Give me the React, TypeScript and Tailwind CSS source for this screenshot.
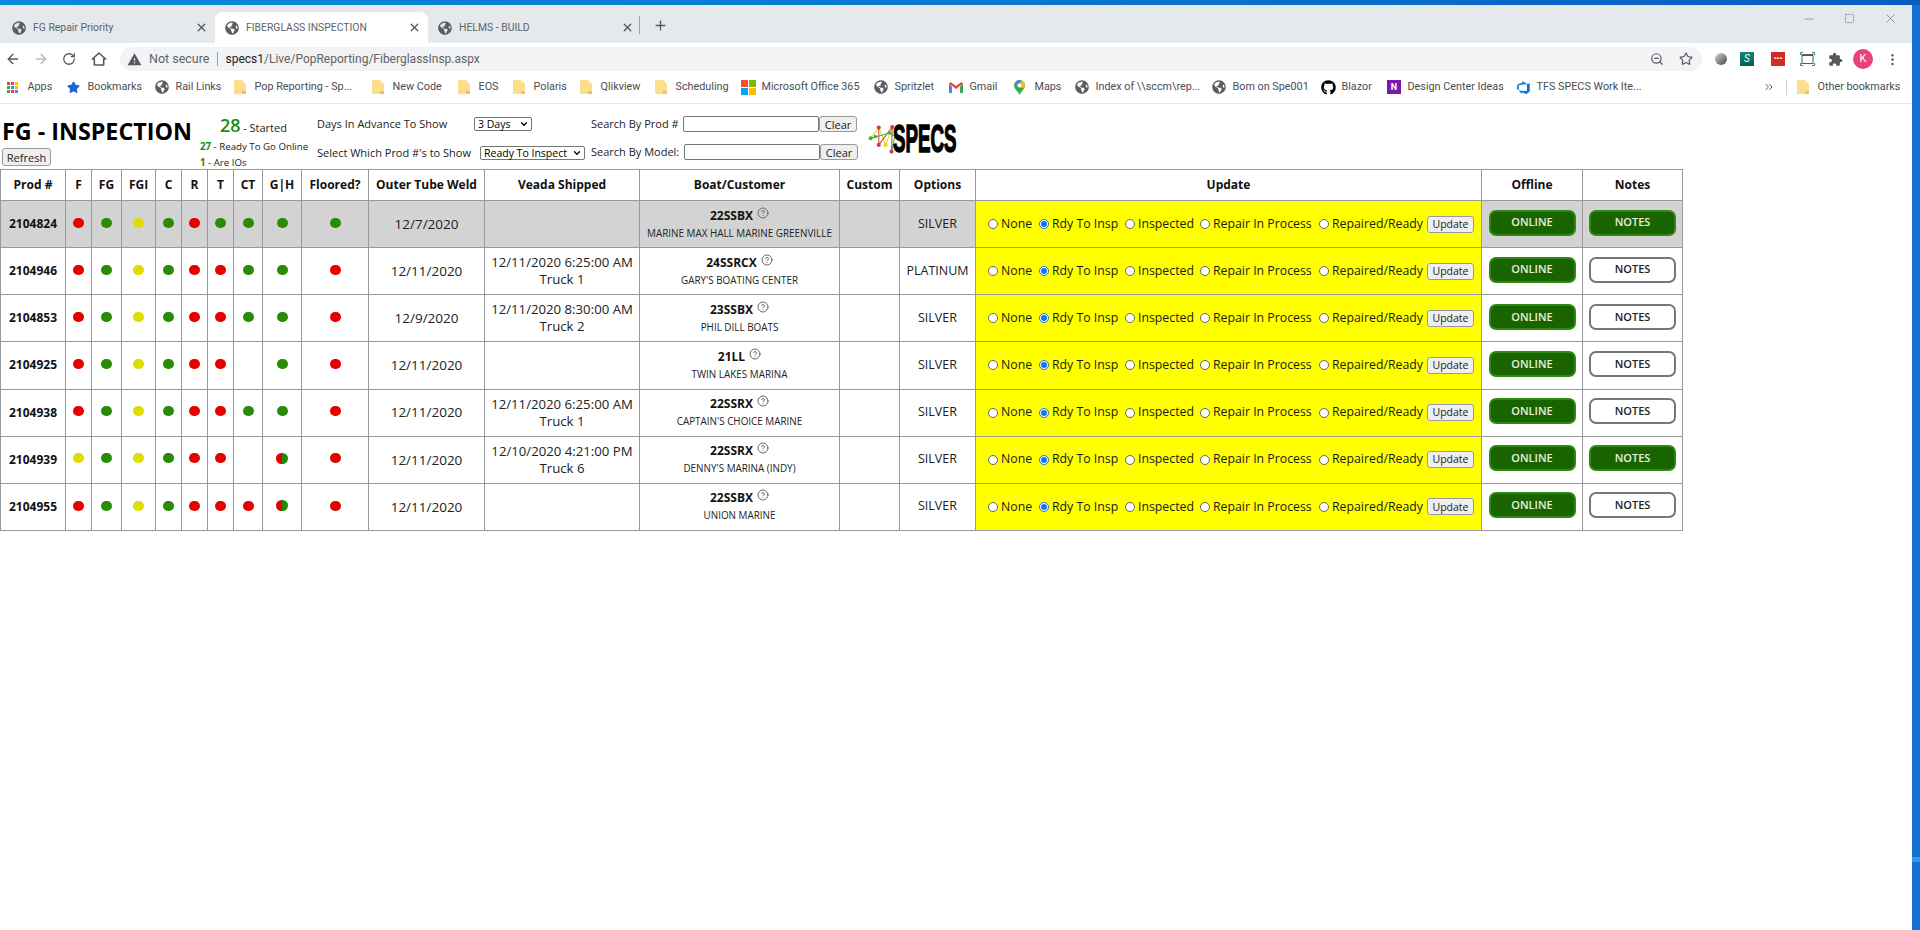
import { X, Plus, ArrowLeft, ArrowRight, RotateCw, Star, ZoomOut, EllipsisVertical, Minus, Square, ChevronsRight, ChevronDown, CircleHelp } from "lucide-react";
import { FaGlobeAmericas, FaGithub } from "react-icons/fa";
import { MdExtension, MdWarning } from "react-icons/md";

const cols = [65, 26, 30, 34, 26, 26, 26, 29, 39, 67, 116, 155, 200, 60, 76, 506, 101, 100];

type Dot = "r" | "g" | "y" | "s" | "";

interface Row {
  prod: string;
  dots: Dot[];
  floored: Dot;
  weld: string;
  ship?: string;
  truck?: string;
  boat: string;
  customer: string;
  options: string;
  notes?: boolean;
  grey?: boolean;
}

const rows: Row[] = [
  { prod: "2104824", dots: ["r", "g", "y", "g", "r", "g", "g", "g"], floored: "g", weld: "12/7/2020", boat: "22SSBX", customer: "MARINE MAX HALL MARINE GREENVILLE", options: "SILVER", notes: true, grey: true },
  { prod: "2104946", dots: ["r", "g", "y", "g", "r", "r", "g", "g"], floored: "r", weld: "12/11/2020", ship: "12/11/2020 6:25:00 AM", truck: "Truck 1", boat: "24SSRCX", customer: "GARY'S BOATING CENTER", options: "PLATINUM" },
  { prod: "2104853", dots: ["r", "g", "y", "g", "r", "r", "g", "g"], floored: "r", weld: "12/9/2020", ship: "12/11/2020 8:30:00 AM", truck: "Truck 2", boat: "23SSBX", customer: "PHIL DILL BOATS", options: "SILVER" },
  { prod: "2104925", dots: ["r", "g", "y", "g", "r", "r", "", "g"], floored: "r", weld: "12/11/2020", boat: "21LL", customer: "TWIN LAKES MARINA", options: "SILVER" },
  { prod: "2104938", dots: ["r", "g", "y", "g", "r", "r", "g", "g"], floored: "r", weld: "12/11/2020", ship: "12/11/2020 6:25:00 AM", truck: "Truck 1", boat: "22SSRX", customer: "CAPTAIN'S CHOICE MARINE", options: "SILVER" },
  { prod: "2104939", dots: ["y", "g", "y", "g", "r", "r", "", "s"], floored: "r", weld: "12/11/2020", ship: "12/10/2020 4:21:00 PM", truck: "Truck 6", boat: "22SSRX", customer: "DENNY'S MARINA (INDY)", options: "SILVER", notes: true },
  { prod: "2104955", dots: ["r", "g", "y", "g", "r", "r", "r", "s"], floored: "r", weld: "12/11/2020", boat: "22SSBX", customer: "UNION MARINE", options: "SILVER" },
];

const headers = ["Prod #", "F", "FG", "FGI", "C", "R", "T", "CT", "G|H", "Floored?", "Outer Tube Weld", "Veada Shipped", "Boat/Customer", "Custom", "Options", "Update", "Offline", "Notes"];

function FolderIcon() {
  return (
    <svg width="12" height="16" viewBox="0 0 12 16">
      <path d="M0 1h8l4 4v10H0z" fill="#fbdf8f" />
      <path d="M8 15v-3h4v3z" fill="#eec35a" />
    </svg>
  );
}

function GlobeIcon() {
  return <FaGlobeAmericas size={14} className="shrink-0 text-[#5a5e63]" />;
}

function AppsIcon() {
  const colors = ["#ea4335", "#ea4335", "#fbbc04", "#34a853", "#4285f4", "#fbbc04", "#34a853", "#ea4335", "#4285f4"];
  return (
    <div className="grid grid-cols-3 gap-px w-[11px]">
      {colors.map((c, i) => (
        <span key={i} className="h-[3px] w-[3px]" style={{ background: c }} />
      ))}
    </div>
  );
}

function GmailIcon() {
  return (
    <svg width="14" height="11" viewBox="0 0 14 11">
      <path d="M0 1.5v9.5h3V4.5z" fill="#4285f4" />
      <path d="M14 1.5v9.5h-3V4.5z" fill="#34a853" />
      <path d="M0 1.5 L7 7 L14 1.5 L12.5 0 L7 4 L1.5 0z" fill="#ea4335" />
    </svg>
  );
}

function MapsIcon() {
  return (
    <svg width="11" height="15" viewBox="0 0 11 15">
      <path d="M5.5 0C2.5 0 0 2.4 0 5.4c0 3.6 4 5.6 5.5 9.6C7 11 11 9 11 5.4 11 2.4 8.5 0 5.5 0z" fill="#34a853" />
      <path d="M5.5 0C3.8 0 2.3.8 1.3 2L8 8.5c1.3-1 3-1.8 3-3.1C11 2.4 8.5 0 5.5 0z" fill="#fbbc04" />
      <path d="M1.3 2 4 4.5 8 1C7.3.4 6.4 0 5.5 0 3.8 0 2.3.8 1.3 2z" fill="#4285f4" />
      <circle cx="5.5" cy="5.4" r="2" fill="#fff" />
    </svg>
  );
}

function DevOpsIcon() {
  return (
    <svg width="15" height="15" viewBox="0 0 24 24">
      <path d="M22 5.5v12.7l-5.2 4.3-8-2.9V22.5l-4.5-5.9 13.1 1V6.400zM17.600 6.200 10.300 1.500v3L3.500 6.500 1.500 9v5.700l2.800 1.200V8.500z" fill="#0a78d4" />
    </svg>
  );
}

function CaptureIcon() {
  return (
    <svg width="15" height="14" viewBox="0 0 15 14" className="ml-[15px] shrink-0" fill="none">
      <rect x="2" y="2.5" width="11" height="9" stroke="#55595e" />
      <rect x="2" y="2" width="11" height="2" fill="#55595e" />
      <path d="M0.500 3V0.500H3M12 0.500h2.500V3M0.500 11v2.500H3M12 13.500h2.500V11" stroke="#2a9a3a" />
    </svg>
  );
}

function Bookmark({ icon, label, w }: { icon: React.ReactNode; label: string; w: number }) {
  return (
    <div className="flex items-center shrink-0" style={{ width: w }}>
      <span className="w-[20.5px] flex items-center shrink-0">{icon}</span>
      <span className="text-[10.8px] text-[#4a4d52] whitespace-nowrap">{label}</span>
    </div>
  );
}

function Tab({ label, active }: { label: string; active?: boolean }) {
  return (
    <div className={`w-[213px] h-[31px] mt-[7px] rounded-t-lg flex items-center pl-[10px] pr-[7px] gap-[7px] ${active ? "bg-white" : ""}`}>
      <GlobeIcon />
      <span className="flex-1 text-[10.4px] text-[#5f6368] whitespace-nowrap">{label}</span>
      <X size={13} className="text-[#50545a]" strokeWidth={2.4} />
    </div>
  );
}

function StatusDot({ color }: { color: Dot }) {
  if (!color) return null;
  if (color === "s") {
    return (
      <span className="inline-flex w-[12px] h-[11px] rounded-full overflow-hidden align-middle">
        <span className="w-1/2 bg-[#e30000]" />
        <span className="w-1/2 bg-[#1f8a0a]" />
      </span>
    );
  }
  const bg = color === "r" ? "bg-[#e60000]" : color === "g" ? "bg-[#2a8c06]" : "bg-[#dfdc00]";
  return <span className={`inline-block w-[11px] h-[10px] rounded-full align-middle ${bg}`} />;
}

function Radio({ label, checked, w }: { label: string; checked?: boolean; w: number }) {
  return (
    <div className="flex items-center shrink-0" style={{ width: w }}>
      <span className={`w-[10px] h-[10px] rounded-full border shrink-0 ${checked ? "border-[#1a73e8] bg-white p-[1px]" : "border-[#666] bg-white"}`}>
        {checked && <span className="block w-full h-full rounded-full bg-[#1a73e8]" />}
      </span>
      <span className="ml-[3px] text-[12.3px] text-[#1a1a1a] whitespace-nowrap">{label}</span>
    </div>
  );
}

function PillButton({ label, on }: { label: string; on: boolean }) {
  return (
    <div className={`mx-auto w-[87px] h-[26px] -mt-[3px] rounded-[7px] flex items-center justify-center text-[11px] font-semibold ${on ? "bg-[#1a6400] border-2 border-[#2f8a14] text-[#e8f0e0]" : "bg-white border-2 border-[#777] text-[#222]"}`}>
      {label}
    </div>
  );
}

function NativeButton({ label, className }: { label: string; className: string }) {
  return (
    <button type="button" className={`bg-[#efefef] border border-[#999] rounded-[3px] text-[#222] leading-none shrink-0 ${className}`}>
      {label}
    </button>
  );
}

function NativeSelect({ label, className }: { label: string; className: string }) {
  return (
    <span className={`h-[14px] border border-[#777] rounded-[2px] text-[10.5px] leading-[12px] pl-[3px] pr-[2px] flex items-center justify-between text-black shrink-0 whitespace-nowrap ${className}`}>
      {label}
      <ChevronDown size={10} strokeWidth={3} />
    </span>
  );
}

function Logo() {
  return (
    <div className="relative w-[88px] h-[31px] mt-[8px]">
      <svg width="37" height="31" viewBox="20 35 110 92" className="absolute left-0 top-0">
        <path d="M28 80 L52 48 L72 100 L92 47 L122 100" stroke="#e2d81c" strokeWidth="3" fill="none" />
        <path d="M52 48 L52 100 L92 47 L90 120" stroke="#d43a3a" strokeWidth="3" fill="none" />
        <path d="M28 80 L85 65 L100 75 L90 120" stroke="#3ab03a" strokeWidth="3" fill="none" />
        <circle cx="28" cy="80" r="6" fill="#3ab03a" />
        <circle cx="52" cy="48" r="6" fill="#d43a3a" />
        <circle cx="42" cy="75" r="5" fill="#3ab03a" />
        <circle cx="72" cy="100" r="6" fill="#e2d81c" />
        <circle cx="52" cy="100" r="6" fill="#d43a3a" />
        <circle cx="92" cy="47" r="6" fill="#d43a3a" />
        <circle cx="90" cy="120" r="6" fill="#d43a3a" />
        <circle cx="122" cy="100" r="6" fill="#e2d81c" />
        <circle cx="85" cy="65" r="5" fill="#3ab03a" />
      </svg>
      <span className="absolute left-[25px] -top-[4px] text-[39px] leading-[39px] font-bold text-black scale-x-[0.48] origin-left font-['Liberation_Sans',sans-serif] [-webkit-text-stroke:1.5px_black]">SPECS</span>
    </div>
  );
}

export default function App() {
  return (
    <div className="relative w-[1920px] h-[930px] overflow-hidden bg-[#1270d4] font-['Open_Sans',sans-serif]">
      <div className="h-[5px] bg-gradient-to-r from-[#0a8ad8] via-[#0a78d0] to-[#0a5cc0]" />
      <div className="absolute right-0 top-[857px] w-[8px] h-[5px] bg-[#2f9be8]" />
      <div className="w-[1912px] h-[925px] bg-white">
        {/* tab strip */}
        <div className="h-[38px] bg-[#e6e9ec] flex relative pl-[2px] font-['Roboto',sans-serif]">
          <Tab label="FG Repair Priority" />
          <Tab label="FIBERGLASS INSPECTION" active />
          <Tab label="HELMS - BUILD" />
          <div className="w-px h-[18px] bg-[#9aa0a6] mt-[11px] -ml-[2px]" />
          <Plus size={15} className="mt-[13px] ml-[13px] text-[#55595e]" strokeWidth={2.2} />
          <div className="absolute right-[14px] top-[6px] flex items-center gap-[28px] text-[#7a7d82]">
            <Minus size={14} strokeWidth={1.2} />
            <Square size={11} strokeWidth={1.2} />
            <X size={15} strokeWidth={1.2} />
          </div>
        </div>
        {/* address bar */}
        <div className="h-[32px] flex items-center pl-[5px] font-['Roboto',sans-serif]">
          <ArrowLeft size={16} className="text-[#55595e] shrink-0" strokeWidth={2} />
          <ArrowRight size={16} className="ml-[12px] text-[#b5b8bc] shrink-0" strokeWidth={2} />
          <RotateCw size={14} className="ml-[13px] text-[#55595e] shrink-0" strokeWidth={2.2} />
          <svg width="16" height="16" viewBox="0 0 24 24" className="ml-[15px] shrink-0" fill="none" stroke="#55595e" strokeWidth="2.4" strokeLinejoin="round">
            <path d="M12 3 L2 12 h3 v9 h14 v-9 h3z" />
          </svg>
          <div className="ml-[13px] w-[1582px] h-[24px] rounded-full bg-[#f1f3f4] flex items-center pl-[7px] shrink-0">
            <MdWarning size={15} className="text-[#55595e]" />
            <span className="ml-[7px] text-[12.5px] text-[#5f6368]">Not secure</span>
            <span className="w-px h-[14px] bg-[#9aa0a6] ml-[7px]" />
            <span className="ml-[8px] text-[12px] text-[#5f6368]"><span className="text-[#202124]">specs1</span>/Live/PopReporting/FiberglassInsp.aspx</span>
            <div className="ml-auto mr-[9px] flex items-center gap-[15px] text-[#55595e]">
              <ZoomOut size={14} />
              <Star size={14} />
            </div>
          </div>
          <span className="ml-[13px] w-[12px] h-[12px] rounded-full bg-gradient-to-br from-[#ddd] to-[#444] shrink-0" />
          <span className="ml-[13px] w-[14px] h-[14px] bg-gradient-to-b from-[#0d8a7a] to-[#0a5f52] text-white text-[10px] leading-[14px] text-center italic shrink-0">S</span>
          <span className="ml-[17px] w-[14px] h-[14px] bg-[#d42b20] text-white text-[8px] leading-[13px] text-center font-bold shrink-0">•••</span>
          <CaptureIcon />
          <MdExtension size={15} className="ml-[13px] text-[#55595e] shrink-0" />
          <span className="ml-[10px] w-[20px] h-[20px] rounded-full bg-[#ec407a] text-white text-[11px] leading-[20px] text-center shrink-0">K</span>
          <EllipsisVertical size={15} className="ml-[12px] text-[#55595e] shrink-0" />
        </div>
        {/* bookmarks */}
        <div className="h-[24px] flex items-center pl-[7px] relative font-['Roboto',sans-serif]">
          <Bookmark icon={<AppsIcon />} label="Apps" w={60} />
          <Bookmark icon={<Star size={13} className="text-[#1a66d8] fill-[#1a66d8]" />} label="Bookmarks" w={88} />
          <Bookmark icon={<GlobeIcon />} label="Rail Links" w={79} />
          <Bookmark icon={<FolderIcon />} label="Pop Reporting - Sp..." w={138} />
          <Bookmark icon={<FolderIcon />} label="New Code" w={86} />
          <Bookmark icon={<FolderIcon />} label="EOS" w={55} />
          <Bookmark icon={<FolderIcon />} label="Polaris" w={67} />
          <Bookmark icon={<FolderIcon />} label="Qlikview" w={75} />
          <Bookmark icon={<FolderIcon />} label="Scheduling" w={86} />
          <Bookmark icon={<span className="w-[15px] h-[15px] grid grid-cols-2 gap-px"><span className="bg-[#f25022]" /><span className="bg-[#7fba00]" /><span className="bg-[#00a4ef]" /><span className="bg-[#ffb900]" /></span>} label="Microsoft Office 365" w={133} />
          <Bookmark icon={<GlobeIcon />} label="Spritzlet" w={75} />
          <Bookmark icon={<GmailIcon />} label="Gmail" w={65} />
          <Bookmark icon={<MapsIcon />} label="Maps" w={61} />
          <Bookmark icon={<GlobeIcon />} label="Index of \\sccm\rep..." w={137} />
          <Bookmark icon={<GlobeIcon />} label="Bom on Spe001" w={109} />
          <Bookmark icon={<FaGithub size={15} className="text-black" />} label="Blazor" w={66} />
          <Bookmark icon={<span className="w-[14px] h-[14px] bg-[#7719aa] text-white text-[9px] leading-[14px] text-center font-bold">N</span>} label="Design Center Ideas" w={129} />
          <Bookmark icon={<DevOpsIcon />} label="TFS SPECS Work Ite..." w={130} />
          <ChevronsRight size={12} className="absolute left-[1763px] text-[#55595e]" />
          <div className="absolute left-[1786px] w-px h-[15px] bg-[#d0d2d4]" />
          <div className="absolute left-[1797px]">
            <Bookmark icon={<FolderIcon />} label="Other bookmarks" w={110} />
          </div>
        </div>
        <div className="h-[1px] bg-[#e4e5e6] mt-[4px]" />
        {/* page */}
        <div className="flex h-[65px] pt-[11px]">
          <div className="w-[200px] pl-[2px]">
            <div className="text-[23.3px] leading-[30px] font-bold text-black mt-[1px] whitespace-nowrap">FG - INSPECTION</div>
            <NativeButton label="Refresh" className="block w-[49px] h-[18px] mt-[2px] text-[11px]" />
          </div>
          <div className="w-[117px] text-[9.7px] text-[#222]">
            <div className="pl-[20px] leading-[20px] whitespace-nowrap"><span className="text-[#1e8c0e] text-[18px] font-semibold">28</span> <span className="text-[11px]">- Started</span></div>
            <div className="mt-[1px] leading-[14px] whitespace-nowrap"><span className="text-[#1e8c0e] font-bold">27</span> - Ready To Go Online</div>
            <div className="mt-[2px] leading-[14px] whitespace-nowrap"><span className="text-[#1e8c0e] font-bold">1</span> - Are IOs</div>
          </div>
          <div className="w-[274px] text-[11px] text-[#222]">
            <div className="flex items-center h-[18px]">
              <span className="w-[157px] whitespace-nowrap">Days In Advance To Show</span>
              <NativeSelect label="3 Days" className="w-[58px]" />
            </div>
            <div className="flex items-center h-[18px] mt-[11px]">
              <span className="w-[163px] whitespace-nowrap">Select Which Prod #'s to Show</span>
              <NativeSelect label="Ready To Inspect" className="w-[105px]" />
            </div>
          </div>
          <div className="w-[277px] text-[11px] text-[#222]">
            <div className="flex items-center h-[18px]">
              <span className="w-[92px] whitespace-nowrap">Search By Prod #</span>
              <span className="w-[136px] h-[16px] border border-[#777] rounded-[2px] shrink-0" />
              <NativeButton label="Clear" className="w-[38px] h-[16px] text-[11px]" />
            </div>
            <div className="flex items-center h-[18px] mt-[10px]">
              <span className="w-[93px] whitespace-nowrap">Search By Model:</span>
              <span className="w-[136px] h-[16px] border border-[#777] rounded-[2px] shrink-0" />
              <NativeButton label="Clear" className="w-[38px] h-[16px] text-[11px]" />
            </div>
          </div>
          <Logo />
        </div>
        {/* table */}
        <table className="table-fixed border-collapse w-[1682px] text-[#222]">
          <colgroup>
            {cols.map((w, i) => (
              <col key={i} style={{ width: w }} />
            ))}
          </colgroup>
          <thead>
            <tr className="h-[31px]">
              {headers.map((h) => (
                <th key={h} className="border border-[#999] text-[12px] font-bold text-[#111] p-0 text-center whitespace-nowrap">{h}</th>
              ))}
            </tr>
          </thead>
          <tbody>
            {rows.map((r) => (
              <tr key={r.prod} className={`h-[47.14px] ${r.grey ? "bg-[#d3d3d3]" : "bg-white"}`}>
                <td className="border border-[#999] p-0 text-center text-[12px] font-bold text-[#111]">{r.prod}</td>
                {r.dots.map((d, i) => (
                  <td key={i} className="border border-[#999] p-0 text-center leading-none pb-[6px]"><StatusDot color={d} /></td>
                ))}
                <td className="border border-[#999] p-0 text-center leading-none pb-[6px]"><StatusDot color={r.floored} /></td>
                <td className="border border-[#999] p-0 text-center text-[13.5px]">{r.weld}</td>
                <td className="border border-[#999] p-0 text-center text-[13.2px] leading-[17px]">
                  {r.ship && <div>{r.ship}</div>}
                  {r.truck && <div>{r.truck}</div>}
                </td>
                <td className="border border-[#999] p-0 text-center">
                  <div className="text-[12px] leading-[17px] font-bold text-[#111] flex items-start justify-center">
                    {r.boat}
                    <CircleHelp size={12} strokeWidth={2} className="ml-[4px] text-[#666]" />
                  </div>
                  <div className="text-[9.9px] leading-[17px] pt-[1px] text-[#222]">{r.customer}</div>
                </td>
                <td className="border border-[#999] p-0" />
                <td className="border border-[#999] p-0 text-center text-[12.5px]">{r.options}</td>
                <td className="border border-[#999] bg-[#ffff00] p-0">
                  <div className="flex items-center pl-[12px]">
                    <Radio label="None" w={51} />
                    <Radio label="Rdy To Insp" checked w={86} />
                    <Radio label="Inspected" w={75} />
                    <Radio label="Repair In Process" w={119} />
                    <Radio label="Repaired/Ready" w={108} />
                    <NativeButton label="Update" className="w-[47px] h-[17px] text-[10.5px]" />
                  </div>
                </td>
                <td className="border border-[#999] p-0"><PillButton label="ONLINE" on /></td>
                <td className="border border-[#999] p-0"><PillButton label="NOTES" on={!!r.notes} /></td>
              </tr>
            ))}
          </tbody>
        </table>
      </div>
    </div>
  );
}
